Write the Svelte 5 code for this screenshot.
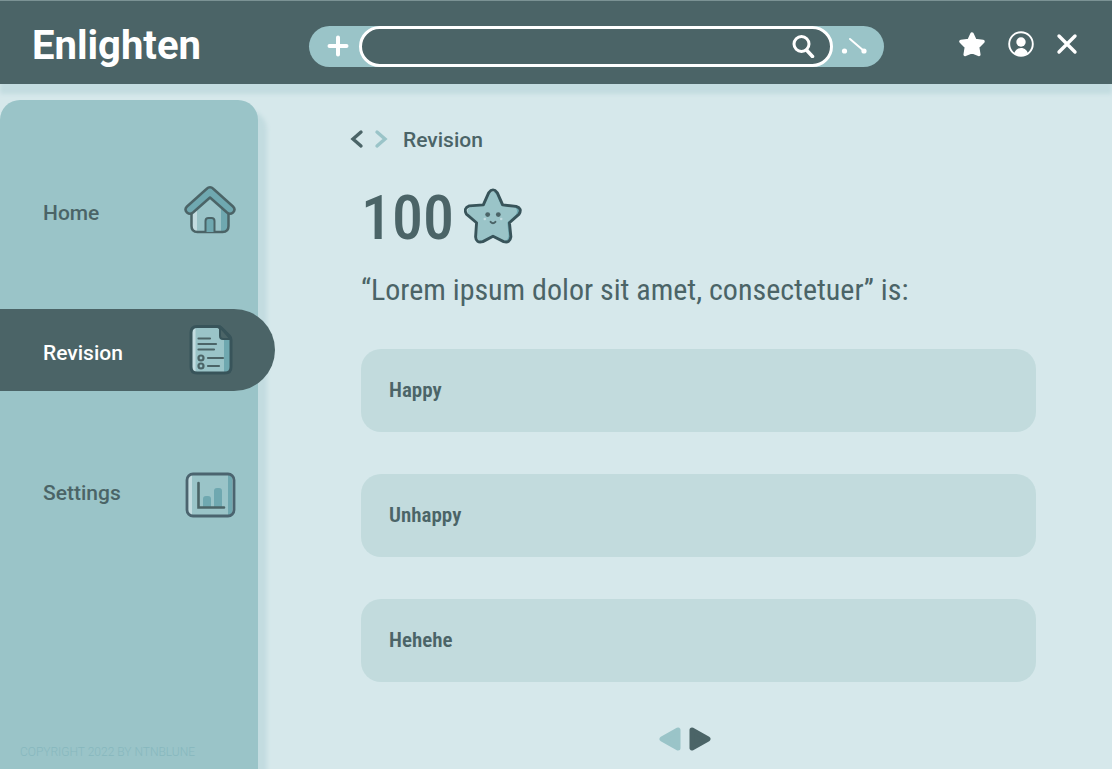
<script>
  const pages = ['Home', 'Revision', 'Settings'];
  const options = ['Happy', 'Unhappy', 'Hehehe'];
  const star = 'M25.500 6Q30 0 34.500 6l5.500 12.500 14 1.500q6.500 2 3 8L47 37l1.500 14.500q-1 7-7.500 5L30 51l-10.500 5.500q-7 2-7.500-5L13 37 2.500 28q-3.500-6 3-8.500l14.500-1z';
  let current = $state('Revision');
  let query = $state('');
  let answer = $state('');
</script>

<div class="app">
  <header>
    <div class="brand">Enlighten</div>
    <form class="search" role="search" onsubmit={(e) => e.preventDefault()}>
      <button type="button" class="add" aria-label="Add">
        <svg width="22" height="22" viewBox="0 0 22 22"><path d="M11 2.500v17M2.500 11h17" stroke="#fff" stroke-width="4" stroke-linecap="round" /></svg>
      </button>
      <div class="field">
        <input type="text" aria-label="Search" bind:value={query} />
        <button type="submit" aria-label="Submit search">
          <svg width="24" height="24" viewBox="0 0 24 24" fill="none" stroke="#fff" stroke-width="3"><circle cx="10.500" cy="10" r="7.500" /><path d="M15.500 16l6 6.500" stroke-width="3.500" stroke-linecap="round" /></svg>
        </button>
      </div>
      <button type="button" class="tool" aria-label="Connect points">
        <svg width="28" height="20" viewBox="0 0 28 20"><path d="M10 3l14 12" stroke="#fff" stroke-width="2" stroke-linecap="round" /><circle cx="4.500" cy="15" r="2.600" fill="#fff" /><circle cx="24" cy="15" r="2.600" fill="#fff" /></svg>
      </button>
    </form>
    <div class="actions">
      <button type="button" aria-label="Favourites">
        <svg width="28" height="28" viewBox="0 0 28 28"><path d="M13 4l3 6.500 8 1.100-5.400 5.400 1.200 7.500L13 21.700 6.200 24.500l1.200-7.500L2 11.600l8-1.100z" fill="#fff" stroke="#fff" stroke-width="3.500" stroke-linejoin="round" /></svg>
      </button>
      <button type="button" aria-label="Profile">
        <svg width="28" height="28" viewBox="0 0 28 28"><defs><clipPath id="face"><circle cx="15" cy="14" r="11.500" /></clipPath></defs><circle cx="15" cy="14" r="11.800" fill="none" stroke="#fff" stroke-width="1.900" /><circle cx="15" cy="12" r="4.700" fill="#fff" /><path d="M7.500 27c0-12 15-12 15 0z" fill="#fff" clip-path="url(#face)" /></svg>
      </button>
      <button type="button" aria-label="Close">
        <svg width="28" height="28" viewBox="0 0 28 28"><path d="M6 6l16 16M22 6L6 22" stroke="#fff" stroke-width="3.400" stroke-linecap="round" /></svg>
      </button>
    </div>
  </header>

  <div class="body">
    <aside>
      <nav>
        {#each pages as page}
          <a href="#{page.toLowerCase()}" class:active={page === current} onclick={() => (current = page)}>
            <span>{page}</span>
            {#if page === 'Home'}
              <svg width="54" height="54" viewBox="0 -1 54 54" stroke-linejoin="round">
                <path d="M9 24L27 10l18 14v19q0 5-5 5H14q-5 0-5-5z" fill="#9ac4c8" />
                <path d="M9 26l5-4v26q-5-1-5-6z" fill="#c3dce0" />
                <path d="M38 20l7 7v15q0 5-5 6h-2z" fill="#6fa8b0" />
                <path d="M8.500 27v15q0 6 6 6h25q6 0 6-6V27" fill="none" stroke="#4b6467" stroke-width="2.500" />
                <path d="M22.500 48V37q0-3 3-3h3q3 0 3 3v11" fill="#6fa8b0" stroke="#4b6467" stroke-width="2" />
                <path d="M23.500 5Q27 1.500 30.500 5L50 22.500q3 3 0 6-3 2.500-6 0L27 13.500l-17 15q-3 2.500-6 0-3-3 0-6z" fill="#6fa8b0" stroke="#4b6467" stroke-width="2.500" />
              </svg>
            {:else if page === 'Revision'}
              <svg width="54" height="54" viewBox="0 0 54 54" stroke-linejoin="round" stroke-linecap="round">
                <path d="M13 3h18l15 12v29q0 6-6 6H13q-6 0-6-6V9q0-6 6-6z" fill="#9ac4c8" />
                <path d="M8 10q0-4 3.500-5v44Q8 48 8 44z" fill="#c3dce0" />
                <path d="M40 15h6v29q0 5-6 5z" fill="#6fa8b0" />
                <path d="M36 3.500L46.500 16H39q-3 0-3-3z" fill="#4b6467" stroke="#38545a" stroke-width="2" />
                <path d="M13 3.500h21q2 0 3.500 1.500l8 8q1.500 1.500 1.500 4v27q0 6-6 6H13q-6 0-6-6V9.500q0-6 6-6z" fill="none" stroke="#38545a" stroke-width="3" />
                <g fill="none" stroke="#4b6467" stroke-width="2.200"><path d="M14.500 15.500H26M14.500 21H32M14.500 26.500H30M24 35h15M24 43h11" /><circle cx="17" cy="35" r="2.500" /><circle cx="17" cy="43" r="2.500" /></g>
              </svg>
            {:else}
              <svg width="54" height="54" viewBox="0 -5 54 54" overflow="visible" stroke-linecap="round">
                <rect x="4" y="6" width="46" height="42" rx="5" fill="#9ac4c8" />
                <path d="M5 11q0-4 4-4v40q-4 0-4-4z" fill="#c3dce0" />
                <path d="M45 7q4 0 4 4v32q0 4-4 4z" fill="#6fa8b0" />
                <rect x="4" y="6" width="47" height="42" rx="6" fill="none" stroke="#4b646f" stroke-width="2.800" />
                <path d="M20 39V31q0-3 3-3h2q3 0 3 3v8zM31 39V23q0-3 3-3h2q3 0 3 3v16z" fill="#6fa8b0" />
                <path d="M15.500 15v24.500H41" fill="none" stroke="#4b6467" stroke-width="2.600" />
              </svg>
            {/if}
          </a>
        {/each}
      </nav>
      <small>COPYRIGHT 2022 BY NTNBLUNE</small>
    </aside>

    <main>
      <div class="crumbs">
        <button type="button" aria-label="Back"><svg width="14" height="20" viewBox="0 0 14 20"><path d="M11 3L3 10l8 7" fill="none" stroke="#4b6467" stroke-width="3.400" stroke-linecap="round" /></svg></button>
        <button type="button" aria-label="Forward"><svg width="14" height="20" viewBox="0 0 14 20"><path d="M3 3l8 7-8 7" fill="none" stroke="#9ac4c8" stroke-width="3.400" stroke-linecap="round" /></svg></button>
        <span>{current}</span>
      </div>

      <div class="quiz">
        <div class="score">
          <span>100</span>
          <svg width="58" height="58" viewBox="0 0 60 60" stroke-linejoin="round">
            <defs><clipPath id="star"><path d={star} /></clipPath></defs>
            <g clip-path="url(#star)">
              <path d={star} fill="#c3dce0" />
              <path d={star} fill="#6fa8b0" transform="translate(4 1)" />
              <path d={star} fill="#9ac4c8" transform="translate(2.500 2) scale(.9 .94)" />
            </g>
            <path d={star} fill="none" stroke="#38545a" stroke-width="3" />
            <g fill="#4b6467"><circle cx="24.500" cy="28.500" r="2.500" /><circle cx="35.500" cy="28.500" r="2.500" /></g>
            <g fill="#c3dce0"><circle cx="21.500" cy="33" r="1.300" /><circle cx="38.500" cy="33" r="1.300" /></g>
            <path d="M27.500 36q2.500 3 5 0" fill="none" stroke="#4b6467" stroke-width="2" stroke-linecap="round" />
          </svg>
        </div>
        <h1>“Lorem ipsum dolor sit amet, consectetuer” is:</h1>
        <div class="options">
          {#each options as option}
            <button type="button" aria-pressed={answer === option} onclick={() => (answer = option)}>{option}</button>
          {/each}
        </div>
      </div>

      <div class="pager">
        <button type="button" aria-label="Previous question"><svg width="22" height="24" viewBox="0 0 22 24"><path d="M3 12L19 3v18z" fill="#9ac4c8" stroke="#9ac4c8" stroke-width="5" stroke-linejoin="round" /></svg></button>
        <button type="button" aria-label="Next question"><svg width="22" height="24" viewBox="0 0 22 24"><path d="M3 3l16 9-16 9z" fill="#4b6467" stroke="#4b6467" stroke-width="5" stroke-linejoin="round" /></svg></button>
      </div>
    </main>
  </div>
</div>

<style>
  :global(body) { margin: 0; background: #d6e8eb; }
  .app {
    min-height: 100vh;
    display: flex;
    flex-direction: column;
    color: #4b6467;
    font-family: Roboto, "Liberation Sans", sans-serif;
    font-size: 21px;
  }
  button { display: flex; align-items: center; justify-content: center; padding: 0; border: 0; background: none; color: inherit; font: inherit; cursor: pointer; }
  svg { display: block; flex: none; }

  header {
    display: flex;
    align-items: center;
    height: 84px;
    box-sizing: border-box;
    padding-top: 7px;
    border-top: 1px solid #7b9294;
    background: #4b6467;
    box-shadow: 0 10px 4px #c3dce0;
  }
  .brand { box-sizing: border-box; width: 309px; padding-left: 32px; color: #fff; font-size: 40px; line-height: 48px; font-weight: 700; }
  .search { flex: 1; display: flex; height: 41px; border-radius: 21px; background: #9ac4c8; }
  .add { width: 50px; padding-left: 8px; }
  .field { flex: 1; display: flex; min-width: 0; box-sizing: border-box; padding: 0 15px; border: 3px solid #fff; border-radius: 21px; background: #4b6467; }
  input { flex: 1; min-width: 0; border: 0; outline: 0; background: none; color: #fff; font: inherit; }
  .tool { width: 51px; padding-right: 10px; }
  .actions { box-sizing: border-box; width: 228px; display: flex; justify-content: flex-end; gap: 19px; padding-right: 31px; padding-bottom: 4px; }

  .body { flex: 1; display: flex; padding-top: 16px; }
  aside {
    width: 258px;
    display: flex;
    flex-direction: column;
    justify-content: space-between;
    border-radius: 20px 20px 0 0;
    background: #9ac4c8;
    box-shadow: 9px 10px 4px #c3dce0;
  }
  nav { display: flex; flex-direction: column; gap: 58px; padding-top: 69px; }
  nav a { display: flex; align-items: center; justify-content: space-between; height: 82px; padding: 0 21px 0 43px; color: inherit; text-decoration: none; font-weight: 500; }
  nav a span { padding-top: 5px; }
  nav a.active { margin-right: -17px; padding-right: 37px; border-radius: 0 41px 41px 0; background: #4b6467; color: #fff; }
  small { padding: 0 20px 9px; color: #87b8be; font-size: 12px; line-height: 16px; font-weight: 300; }

  main { flex: 1; min-width: 0; display: flex; flex-direction: column; padding: 26px 76px 16px 92px; }
  .crumbs { display: flex; align-items: center; gap: 10px; height: 26px; font-weight: 500; }
  .crumbs span { padding-left: 5px; padding-top: 2px; }
  .quiz { padding-left: 11px; }
  .score { display: flex; align-items: center; gap: 10px; height: 64px; padding-top: 32px; font-family: "Roboto Condensed", Roboto, sans-serif; font-size: 62px; line-height: 64px; font-weight: 500; }
  .score span { padding-top: 4px; }
  h1 { margin: 23px 0 40px; font-family: "Roboto Condensed", Roboto, sans-serif; font-size: 30px; line-height: 38px; font-weight: 400; }
  .options { display: flex; flex-direction: column; gap: 42px; }
  .options button { justify-content: flex-start; height: 83px; padding: 0 28px 2px; border-radius: 20px; background: #c2dbdd; font-family: "Roboto Condensed", Roboto, sans-serif; font-size: 21px; font-weight: 600; }
  .pager { display: flex; gap: 8px; justify-content: center; padding-top: 45px; padding-right: 17px; }
</style>
